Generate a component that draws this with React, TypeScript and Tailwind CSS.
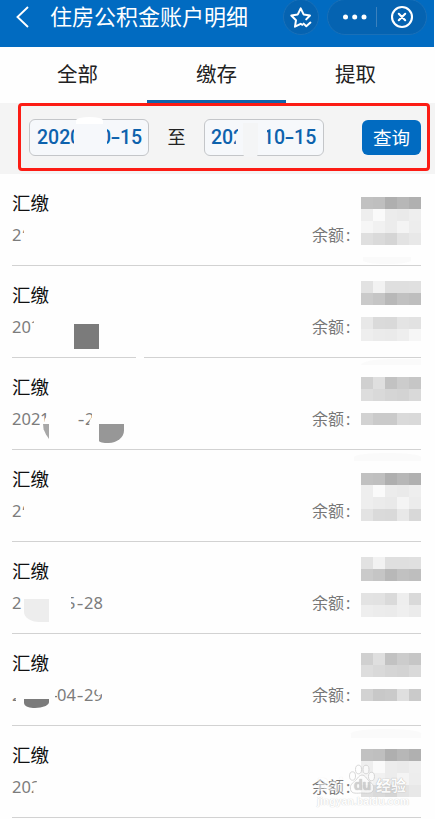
import React from 'react';
import clsx from 'clsx';

interface DatePiece {
  text: string;
  className: string;
}

interface AccountRecord {
  id: number;
  date: DatePiece[];
  mosaicOffset: string;
  mosaic: string[][];
  blots?: string[];
}

const MOSAIC_TALL = [
  ['#c1c1c1', '#bfbfbf', '#afafaf', '#b7b7b7', '#b0b0b0'],
  ['#eeeeee', '#fafafa', '#ececec', '#eaeaea', '#eeeeee'],
  ['#f6f6f6', '#f1f1f1', '#ececec', '#f4f4f4', '#ededed'],
  ['#dfdfdf', '#dadada', '#d5d5d5', '#e3e3e3', '#e8e8e8'],
];

const records: AccountRecord[] = [
  {
    id: 1,
    date: [
      { text: '2', className: 'w-[10px]' },
      { text: '0', className: 'w-[2px] [clip-path:inset(0_0_14px_0)]' },
    ],
    mosaicOffset: 'mt-[23px]',
    mosaic: MOSAIC_TALL,
    blots: ['left-[363px] top-[83px] w-[48px] h-[7px] bg-[#fafafa] rounded-b-[50%]'],
  },
  {
    id: 2,
    date: [
      { text: '20', className: 'w-[19px]' },
      { text: '2', className: 'w-[3px] [clip-path:inset(0_0_15px_0)]' },
    ],
    mosaicOffset: 'mt-[15px]',
    mosaic: [
      ['#e2e2e2', '#f2f2f2', '#dfdfdf', '#dfdfdf', '#e0e0e0'],
      ['#cacaca', '#c5c5c5', '#b8b8b8', '#c1c1c1', '#bebebe'],
      [],
      ['#e8e8e8', '#dadada', '#d9d9d9', '#e4e4e4', '#e2e2e2'],
      ['#eeeeee', '#ebebeb', '#eaeaea', '#eeeeee', '#f6f6f6'],
    ],
    blots: [
      'left-[74px] top-[58px] w-[25px] h-[25px] bg-[#7b7b7b]',
      'left-[136px] top-[91px] w-[8px] h-[2px] bg-white',
    ],
  },
  {
    id: 3,
    date: [
      { text: '202', className: 'w-[28px]' },
      { text: '1', className: 'w-[7px] [clip-path:polygon(0_0,100%_0,100%_9px,70%_12px,60%_15px,0_15px)]' },
      { text: '-', className: 'ml-[30px] w-[8px] text-center scale-x-125' },
      { text: '2', className: 'w-[7px] [clip-path:polygon(0_0,100%_0,100%_10px,70%_13px,50%_100%,0_100%)]' },
    ],
    mosaicOffset: 'mt-[19px]',
    mosaic: [
      ['#d0d0d0', '#dfdfdf', '#c2c2c2', '#cccccc', '#c6c6c6'],
      ['#dddddd', '#d9d9d9', '#d5d5d5', '#d3d3d3', '#d9d9d9'],
      [],
      ['#d2d2d2', '#cacaca', '#cacaca', '#dadada', '#d9d9d9'],
    ],
    blots: [
      'left-[361px] top-[1px] w-[60px] h-[6px] bg-[#fafafa] rounded-tl-[30px_6px]',
      'left-[43px] top-[66px] w-[6px] h-[15px] bg-[#a8a8a8] [clip-path:polygon(0_0,100%_0,100%_100%,50%_70%,10%_35%)]',
      'left-[99px] top-[66px] w-[25px] h-[19px] bg-[#979797] rounded-br-[16px_13px] rounded-bl-[10px_2px]',
    ],
  },
  {
    id: 4,
    date: [
      { text: '2', className: 'w-[10px]' },
      { text: '0', className: 'w-[2px] [clip-path:inset(0_0_13px_0)]' },
    ],
    mosaicOffset: 'mt-[23px]',
    mosaic: [
      MOSAIC_TALL[0],
      MOSAIC_TALL[1],
      ['#eeeeee', '#ebebeb', '#e9e9e9', '#f4f4f4', '#ececec'],
      ['#e3e3e3', '#dadada', '#d9d9d9', '#e8e8e8', '#d8d8d8'],
    ],
    blots: ['left-[354px] top-[3px] w-[67px] h-[8px] bg-[#fafafa] rounded-t-[50%]'],
  },
  {
    id: 5,
    date: [
      { text: '2', className: 'w-[10px]' },
      { text: '5', className: 'ml-[44px] w-[10px] [clip-path:inset(0_0_0_5px)]' },
      { text: '-', className: 'w-[8px] text-center scale-x-125' },
      { text: '28', className: 'w-[19px]' },
    ],
    mosaicOffset: 'mt-[15px]',
    mosaic: [
      ['#e2e2e2', '#f2f2f2', '#dfdfdf', '#dfdfdf', '#e0e0e0'],
      ['#cacaca', '#c5c5c5', '#b8b8b8', '#c1c1c1', '#bebebe'],
      [],
      ['#e3e3e3', '#e2e2e2', '#dadada', '#eeeeee', '#d9d9d9'],
      ['#eeeeee', '#ececec', '#ebebeb', '#efefef', '#ebebeb'],
    ],
    blots: ['left-[24px] top-[57px] w-[25px] h-[23px] bg-[#ededed] rounded-bl-[15px_10px]'],
  },
  {
    id: 6,
    date: [
      { text: '2', className: 'w-[5px] [clip-path:inset(15px_1px_0_0)]' },
      { text: '-', className: 'ml-[36px] w-[4px] [clip-path:inset(0_0_0_2px)] text-right' },
      { text: '04', className: 'w-[19px]' },
      { text: '-', className: 'w-[8px] text-center scale-x-125' },
      { text: '29', className: 'w-[18px] [clip-path:polygon(0_0,11px_0,14px_13px,100%_11px,100%_100%,0_100%)]' },
    ],
    mosaicOffset: 'mt-[19px]',
    mosaic: [
      ['#d0d0d0', '#dfdfdf', '#c2c2c2', '#cccccc', '#c6c6c6'],
      ['#dddddd', '#d9d9d9', '#d5d5d5', '#d3d3d3', '#d9d9d9'],
      [],
      ['#d2d2d2', '#c8c8c8', '#cacaca', '#dfdfdf', '#cacaca'],
    ],
    blots: ['left-[24px] top-[65px] w-[25px] h-[9px] bg-[#7b7b7b] rounded-bl-[9px_5px] rounded-br-[14px_6px]'],
  },
  {
    id: 7,
    date: [
      { text: '20', className: 'w-[19px]' },
      { text: '2', className: 'w-[6px] [clip-path:polygon(0_0,100%_0,100%_7px,30%_10px,50%_100%,0_100%)]' },
    ],
    mosaicOffset: 'mt-[23px]',
    mosaic: MOSAIC_TALL,
    blots: ['left-[351px] top-[3px] w-[70px] h-[9px] bg-[#fafafa] rounded-t-[50%]'],
  },
];

const tabs = ['全部', '缴存', '提取'];

const Header = () => (
  <header className="flex items-center w-[434px] h-[47px] pb-[13px] bg-[#016bc1] text-white">
    <svg className="ml-[15px] w-[16px] h-[24px] shrink-0" viewBox="0 0 16 24" fill="none" stroke="currentColor" strokeWidth="1.9">
      <path d="M13 2 2.5 12 13 22" />
    </svg>
    <h1 className="ml-[19px] w-[200px] pb-[2px] text-[22px] leading-[32px] whitespace-nowrap">住房公积金账户明细</h1>
    <div className="ml-[33px] w-[36px] h-[36px] shrink-0 rounded-full border border-[#1a70b8] bg-[#0563b1] flex items-center justify-center">
      <svg className="w-[24px] h-[24px]" viewBox="0 0 24 24" fill="none" stroke="currentColor" strokeWidth="2" strokeLinejoin="round" strokeLinecap="round">
        <path d="M13.5 19.8 11.7 18.8 6 21.7 7 15.2 2.3 10.5 8.8 9.4 11.7 3.4 14.6 9.4 21 10.5 17.2 14.4" />
        <path d="M14.6 18.6 17.3 21.2 21.4 17.6" />
      </svg>
    </div>
    <div className="ml-[8px] w-[100px] h-[36px] shrink-0 rounded-full border border-[#1a70b8] bg-[#0563b1] flex items-center">
      <svg className="ml-[14px] w-[26px] h-[6px]" viewBox="0 0 26 6" fill="currentColor">
        <circle cx="3.5" cy="3" r="2.5" />
        <circle cx="12.7" cy="3" r="2.5" />
        <circle cx="22" cy="3" r="2.5" />
      </svg>
      <span className="ml-[8px] w-px h-[20px] bg-[#3c81bd]" />
      <svg className="ml-[13px] w-[24px] h-[24px]" viewBox="0 0 24 24" fill="none" stroke="currentColor" strokeWidth="2.1" strokeLinecap="round">
        <circle cx="12" cy="12" r="10" />
        <path d="M8.8 8.8 15.2 15.2M15.2 8.8 8.8 15.2" />
      </svg>
    </div>
  </header>
);

const Tabs = () => (
  <nav className="flex h-[56px] pl-[8px]">
    {tabs.map((tab, i) => (
      <div
        key={tab}
        className={clsx(
          'w-[139px] h-[56px] text-center text-[20.5px] leading-[54px] text-[#222]',
          i === 1 && 'border-b-3 border-[#1264aa]'
        )}
      >
        {tab}
      </div>
    ))}
  </nav>
);

const Hyphen = () => <span className="inline-block w-[9px] text-center scale-x-150">-</span>;

const dateBox =
  "relative flex w-[120px] h-[37px] shrink-0 rounded-[6px] border border-[#c4c6c9] bg-[#f6f8fb] text-[19.5px] leading-[36px] font-medium text-[#0d62ad] whitespace-nowrap [font-family:Roboto,'Noto_Sans',sans-serif]";

const FilterBar = () => (
  <section className="h-[71px] bg-[#f4f4f4] pl-[18px]">
    <div className="flex items-center w-[412px] h-[68px] rounded-[4px] border-3 border-[#fc1c14] pl-[8px] pr-[6px]">
      <div className={clsx(dateBox, 'pl-[7px]')}>
        <span className="w-[33px]">202</span>
        <span className="w-[11px] [clip-path:inset(0_7px_0_0)]">0</span>
        <span className="ml-[19px] w-[11px] [clip-path:inset(0_0_0_7px)]">0</span>
        <span><Hyphen />15</span>
        <span className="absolute left-[46px] top-[-3px] w-[27px] h-[7px] rounded-t-[50%] bg-white" />
      </div>
      <span className="w-[55px] text-center text-[18px] text-[#222]">至</span>
      <div className={clsx(dateBox, 'pl-[6px]')}>
        <span className="w-[22px]">20</span>
        <span className="w-[10px] [clip-path:polygon(0_0,50%_0,50%_14px,25%_18px,35%_100%,0_100%)]">2</span>
        <span className="ml-[20px] w-[11px] [clip-path:inset(0_0_0_4px)]">1</span>
        <span>0<Hyphen />15</span>
        <span className="absolute left-[38px] top-[3px] w-[15px] h-[34px] bg-[#f4f5f6] rounded-b-[4px]" />
      </div>
      <button className="ml-auto w-[59px] h-[35px] rounded-[6px] bg-[#016bc1] text-[18.5px] leading-[35px] text-white">
        查询
      </button>
    </div>
  </section>
);

const Mosaic = ({ cells }: { cells: string[][] }) => (
  <div className="w-[60px]">
    {cells.map((line, i) => (
      <div key={i} className="flex h-[12px]">
        {line.map((color, j) => (
          <span key={j} className="w-[12px] h-[12px]" style={{ backgroundColor: color }} />
        ))}
      </div>
    ))}
  </div>
);

const Watermark = () => (
  <div className="absolute left-[305px] top-[38px] w-[96px] h-[46px] opacity-85">
    <div className="flex items-end h-[31px] text-[15px] leading-[20px] font-bold text-white [text-shadow:0_0_1px_#aaa,0_0_1px_#bbb]">
      <span className="w-[31px] text-[17px] opacity-60 [text-shadow:0_0_1px_#ddd]">Bai</span>
      <svg className="w-[28px] h-[31px]" viewBox="0 0 28 31" fill="#ffffff" fillOpacity=".8" stroke="#cccccc" strokeWidth=".9">
        <ellipse cx="4.5" cy="12" rx="3" ry="4.2" />
        <ellipse cx="10.5" cy="5.5" rx="3" ry="4.3" />
        <ellipse cx="18" cy="5.5" rx="3" ry="4.3" />
        <ellipse cx="23.5" cy="12.5" rx="3" ry="4.2" />
        <path d="M14 11c-3 0-4 3-6.500 5.500-3 2.500-6 4.500-5 9 1 5 7 3.500 11.500 3.500s10.500 1.500 11.500-3.500c1-4.500-2-6.500-5-9C18 14 17 11 14 11Z" />
        <text x="6" y="26" fontSize="14" fontWeight="700" fontFamily="Liberation Sans" fill="#d0d0d0" stroke="none">du</text>
      </svg>
      <span className="whitespace-nowrap">经验</span>
    </div>
    <p className="text-[10.5px] leading-[13px] font-bold text-white [text-shadow:0_0_1px_#ccc,0_0_1px_#ddd] [font-family:'Liberation_Sans',sans-serif]">jingyan.baidu.com</p>
  </div>
);

const RecordRow = ({ record, last }: { record: AccountRecord; last: boolean }) => (
  <li className="relative flex w-[409px] h-[92px] ml-[12px] border-b border-[#d2d2d2]">
    <div className="flex-1 pt-[16px]">
      <h2 className="text-[18.5px] leading-[26px] text-[#111]">汇缴</h2>
      <div className="mt-[7px] flex text-[16.5px] leading-[24px] text-[#7c7c7c]">
        {record.date.map((piece, i) => (
          <span key={i} className={clsx('shrink-0 overflow-hidden', piece.className)}>{piece.text}</span>
        ))}
      </div>
    </div>
    <span className="w-[49px] pt-[49px] text-[16px] leading-[24px] text-[#777] whitespace-nowrap">
      余额<span className="ml-[2px]">:</span>
    </span>
    <div className={record.mosaicOffset}>
      <Mosaic cells={record.mosaic} />
    </div>
    {record.blots?.map(blot => (
      <span key={blot} className={clsx('absolute -ml-[12px]', blot)} />
    ))}
    {last && <Watermark />}
  </li>
);

const App: React.FC = () => (
  <div className="w-[435px] h-[819px] overflow-hidden bg-[#fefefe] [font-family:'Noto_Sans','Noto_Sans_CJK_SC',sans-serif]">
    <Header />
    <Tabs />
    <FilterBar />
    <ul>
      {records.map((record, i) => (
        <RecordRow key={record.id} record={record} last={i === records.length - 1} />
      ))}
    </ul>
  </div>
);

export default App;
